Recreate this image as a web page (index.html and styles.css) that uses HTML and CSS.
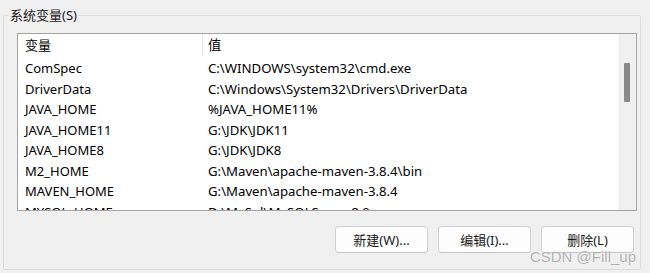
FILE: index.html
```html
<!DOCTYPE html>
<html lang="zh-CN">
<head>
    <meta charset="UTF-8">
    <title>系统变量</title>
    <link rel="stylesheet" href="styles.css">
</head>
<body>
    <div class="group">
        <span class="group-title">系统变量(S)</span>
        <div class="list">
            <div class="list-body">
                <div class="row header">
                    <div class="col name">变量</div>
                    <div class="col value">值</div>
                </div>
                <div class="row"><div class="col name">ComSpec</div><div class="col value">C:\WINDOWS\system32\cmd.exe</div></div>
                <div class="row"><div class="col name">DriverData</div><div class="col value">C:\Windows\System32\Drivers\DriverData</div></div>
                <div class="row"><div class="col name">JAVA_HOME</div><div class="col value">%JAVA_HOME11%</div></div>
                <div class="row"><div class="col name">JAVA_HOME11</div><div class="col value">G:\JDK\JDK11</div></div>
                <div class="row"><div class="col name">JAVA_HOME8</div><div class="col value">G:\JDK\JDK8</div></div>
                <div class="row"><div class="col name">M2_HOME</div><div class="col value">G:\Maven\apache-maven-3.8.4\bin</div></div>
                <div class="row"><div class="col name">MAVEN_HOME</div><div class="col value">G:\Maven\apache-maven-3.8.4</div></div>
                <div class="row"><div class="col name">MYSQL_HOME</div><div class="col value">D:\MySql\MySQLServer8.0</div></div>
            </div>
            <div class="scrollbar">
                <div class="thumb"></div>
            </div>
        </div>
        <div class="actions">
            <button>新建(W)...</button>
            <button>编辑(I)...</button>
            <button>删除(L)</button>
        </div>
    </div>
    <div class="watermark">CSDN @Fill_up</div>
</body>
</html>
```

FILE: styles.css
```css
* {
    margin: 0;
    padding: 0;
    box-sizing: border-box;
}

body {
    background: #f0f0f0;
    width: 650px;
    height: 273px;
    overflow: hidden;
    position: relative;
    font-family: "Noto Sans", "Noto Sans CJK SC", sans-serif;
    font-size: 13px;
    color: #000;
}

.group {
    position: relative;
    margin: 15px 9px 0 3px;
    height: 255px;
    border: 1px solid #dcdcdc;
    border-radius: 2px;
    padding: 17px 3px 0 13px;
}

.group-title {
    position: absolute;
    top: -10px;
    left: 5px;
    padding: 0 1px;
    background: #f0f0f0;
    color: #1a1a1a;
    line-height: 18px;
}

.list {
    display: flex;
    height: 178px;
    border: 1px solid #a5a5a5;
    background: #fff;
    overflow: hidden;
}

.list-body {
    flex: 1;
    overflow: hidden;
}

.row {
    display: flex;
    height: 20.5px;
    line-height: 20.5px;
    white-space: nowrap;
}

.row.header {
    height: 22px;
    line-height: 22px;
    margin-bottom: 2px;
}

.col {
    overflow: hidden;
}

.name {
    width: 185px;
    padding-left: 7px;
}

.value {
    flex: 1;
    padding-left: 5px;
    font-size: 13.2px;
}

.header .name {
    border-right: 1px solid #e5e5e5;
}

.scrollbar {
    width: 18px;
    background: #f0f0f0;
    border-left: 1px solid #f6f6f6;
    padding: 29px 0 0 5px;
}

.thumb {
    width: 6px;
    height: 39px;
    background: #8a8a8a;
    border-radius: 1px;
}

.actions {
    display: flex;
    justify-content: flex-end;
    gap: 10px;
    margin-top: 15px;
    padding-right: 3px;
}

button {
    width: 93px;
    height: 27px;
    border: 1px solid #d0d0d0;
    border-bottom-color: #c4c4c4;
    border-radius: 4px;
    background: #fdfdfd;
    font-family: "Noto Sans", "Noto Sans CJK SC", sans-serif;
    font-size: 13px;
    color: #1a1a1a;
}

.watermark {
    position: absolute;
    right: 14px;
    bottom: 8px;
    font-family: "Liberation Sans", Arial, sans-serif;
    font-size: 15px;
    color: rgba(150, 150, 150, 0.75);
    text-shadow: 0 0 1px #fff;
}
```
